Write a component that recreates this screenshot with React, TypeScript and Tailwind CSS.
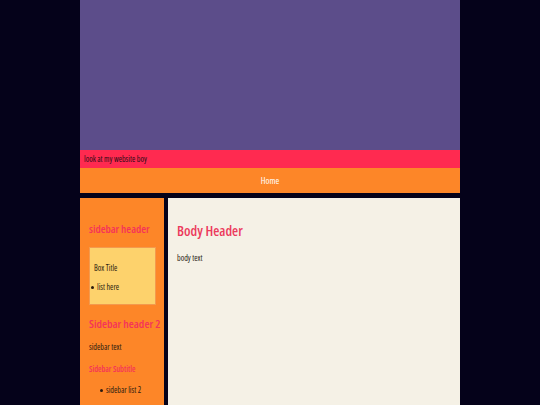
import React from 'react';

function Bullet({ children }: { children: React.ReactNode }) {
  return (
    <li className="flex items-center gap-[3px]">
      <span className="h-[3px] w-[3px] shrink-0 rounded-full bg-[#2a1a10]" />
      {children}
    </li>
  );
}

function Sidebar() {
  return (
    <aside className="bg-[#fd8628] px-[9px] pt-[24px] pb-4">
      <h2 className="text-[11px] leading-[14px] font-semibold whitespace-nowrap text-[#f5325a]">sidebar header</h2>
      <div className="mt-[11px] h-[58px] w-[67px] border border-[#f39a4e] bg-[#fdd26c] px-[4px] pt-[15px]">
        <p className="text-[8px] leading-[10px] font-medium text-[#2a1a10]">Box Title</p>
        <ul className="mt-[9px] -ml-[3px] text-[8px] leading-[10px] font-medium text-[#2a1a10]">
          <Bullet>list here</Bullet>
        </ul>
      </div>
      <h2 className="mt-[11px] text-[11.5px] leading-[16px] font-semibold whitespace-nowrap text-[#f5325a]">Sidebar header 2</h2>
      <p className="mt-[10px] text-[8px] leading-[10px] font-medium text-[#2a1a10]">sidebar text</p>
      <h3 className="mt-[12px] text-[8px] leading-[10px] font-semibold whitespace-nowrap text-[#f5325a]">Sidebar Subtitle</h3>
      <ul className="mt-[11px] pl-[11px] text-[8px] leading-[10px] font-medium text-[#2a1a10]">
        <Bullet>sidebar list 2</Bullet>
      </ul>
    </aside>
  );
}

export default function App() {
  return (
    <div className="min-h-[405px] w-full bg-[#05021a] font-['Open_Sans',sans-serif] font-stretch-condensed">
      <div className="mx-auto flex w-[380px] flex-col">
        <header className="h-[150px] bg-[#5c4d8a]" />
        <div className="flex h-[18px] items-center bg-[#ff2a50] px-[4px] text-[8px] font-medium text-[#2a0a14]">
          look at my website boy
        </div>
        <nav className="flex h-[25px] items-center justify-center bg-[#fd8628] text-[9px] font-medium text-white">
          Home
        </nav>
        <div className="mt-[5px] grid min-h-[207px] grid-cols-[84px_1fr] gap-[4px]">
          <Sidebar />
          <main className="bg-[#f5f1e6] px-[9px] pt-[24px]">
            <h1 className="text-[14px] leading-[18px] font-semibold text-[#ec3a5c]">Body Header</h1>
            <p className="mt-[13px] text-[8px] leading-[10px] font-medium text-[#2a1a10]">body text</p>
          </main>
        </div>
      </div>
    </div>
  );
}
